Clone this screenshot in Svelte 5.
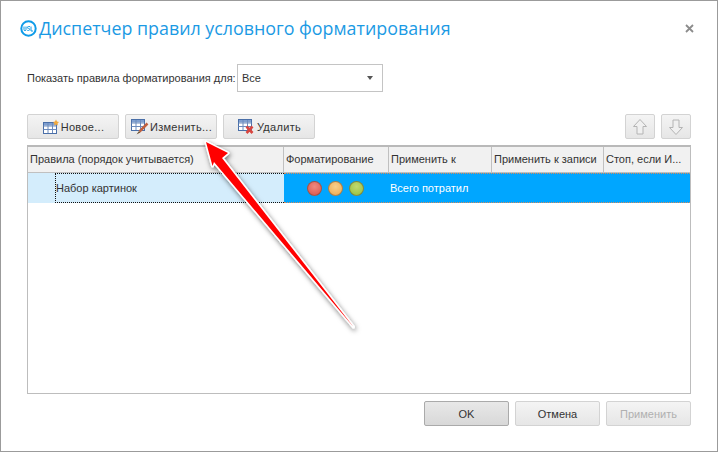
<script>
    const columns = [
        { label: 'Правила (порядок учитывается)', width: 256 },
        { label: 'Форматирование', width: 105 },
        { label: 'Применить к', width: 103 },
        { label: 'Применить к записи', width: 112 },
        { label: 'Стоп, если И...', width: 85 }
    ];
</script>

<div class="window">
    <header class="title">
        <svg class="logo" width="17" height="17" viewBox="0 0 17 17">
            <circle cx="8.5" cy="8.5" r="7.2" fill="none" stroke="#0f9be8" stroke-width="2" />
            <path d="M4 6.5v3q0 1.2 1 1.2t1-1.2v-3M10 6.6H8.2q-.8 0-.8.9t.8.9h.6q.8 0 .8 1t-.8 1H7.300M11 6.500v4.500h2" fill="none" stroke="#0f9be8" stroke-width="1" />
        </svg>
        <h1>Диспетчер правил условного форматирования</h1>
        <svg class="close" width="9" height="9" viewBox="0 0 9 9">
            <path d="M1 1l7 7M8 1l-7 7" stroke="#8c8c8c" stroke-width="1.800" />
        </svg>
    </header>

    <div class="filter">
        <span class="filter-label">Показать правила форматирования для:</span>
        <div class="select">
            <span>Все</span>
            <i class="caret"></i>
        </div>
    </div>

    <div class="toolbar">
        <button class="btn tool">
            <svg width="18" height="16" viewBox="0 0 18 16">
                <rect x="1.500" y="3.500" width="13" height="11" fill="#fff" stroke="#4a6fa8" />
                <rect x="2" y="4" width="12" height="2.500" fill="#7f9fd0" />
                <path d="M1.500 7h13M1.500 10.500h13M6 4v10M10.500 4v10" stroke="#6d8cbd" />
                <path d="M14 0.500l1 2 2 .5-1.500 1.500.5 2-2-1-2 1 .5-2L11 3l2-.5z" fill="#f2a93b" />
            </svg>
            Новое...
        </button>
        <button class="btn tool">
            <svg width="19" height="18" viewBox="0 0 19 18">
                <rect x="1.500" y="1.500" width="13" height="11" fill="#fff" stroke="#4a6fa8" />
                <rect x="2" y="2" width="12" height="2.500" fill="#7f9fd0" />
                <path d="M1.500 5h13M1.500 8.500h13M6 2v10M10.500 2v10" stroke="#6d8cbd" />
                <path d="M17.500 5.500l-8 8" stroke="#c0603f" stroke-width="2.500" />
                <path d="M9 13l-2.500 3.500 3.800-2z" fill="#6b5030" />
            </svg>
            Изменить...
        </button>
        <button class="btn tool">
            <svg width="19" height="17" viewBox="0 0 19 17">
                <rect x="1.500" y="1.500" width="13" height="11" fill="#fff" stroke="#4a6fa8" />
                <rect x="2" y="2" width="12" height="2.500" fill="#7f9fd0" />
                <path d="M1.500 5h13M1.500 8.500h13M6 2v10M10.500 2v10" stroke="#6d8cbd" />
                <path d="M9.500 8.500l6 6.500M15.500 8.500l-6 6.500" stroke="#d8453f" stroke-width="2.600" />
            </svg>
            Удалить
        </button>
        <div class="spacer"></div>
        <button class="btn move" aria-label="Вверх">
            <svg width="16" height="18" viewBox="0 0 16 18">
                <path d="M8 1.500L14.500 8.500H11V16H5V8.500H1.500z" fill="#f0f0f0" stroke="#b4b4b4" />
            </svg>
        </button>
        <button class="btn move" aria-label="Вниз">
            <svg width="16" height="18" viewBox="0 0 16 18">
                <path d="M8 16.500L14.500 9.500H11V2H5V9.500H1.500z" fill="#f0f0f0" stroke="#b4b4b4" />
            </svg>
        </button>
    </div>

    <div class="grid">
        <div class="head">
            {#each columns as col}
                <div class="th" style="width: {col.width}px">{col.label}</div>
            {/each}
        </div>
        <div class="row">
            <div class="rule">
                <div class="indent"></div>
                <div class="rule-name">Набор картинок</div>
            </div>
            <div class="selected">
                <div class="dots">
                    <i class="dot red"></i>
                    <i class="dot orange"></i>
                    <i class="dot green"></i>
                </div>
                <div class="applies">Всего потратил</div>
            </div>
        </div>
    </div>

    <footer class="actions">
        <button class="btn action primary">OK</button>
        <button class="btn action">Отмена</button>
        <button class="btn action disabled">Применить</button>
    </footer>

    <svg class="arrow" width="718" height="452" viewBox="0 0 718 452">
        <defs>
            <filter id="shadow" x="-20%" y="-20%" width="140%" height="140%">
                <feDropShadow dx="1" dy="2" stdDeviation="2.500" flood-color="#000" flood-opacity="0.55" />
            </filter>
        </defs>
        <path
            class="arrow-shape"
            d="M206 142L228 153L222 158L353.500 327L214 162L212.500 166Z"
            filter="url(#shadow)"
        />
    </svg>
</div>

<style>
    :global(body) {
        margin: 0;
        background: #fff;
    }

    .window {
        position: relative;
        box-sizing: border-box;
        width: 718px;
        height: 452px;
        border: 1px solid #9b9b9b;
        padding: 0 26px;
        background: #fff;
        font-family: 'Liberation Sans', Arial, sans-serif;
        font-size: 11px;
        color: #333;
        overflow: hidden;
    }

    .title {
        display: flex;
        align-items: center;
        height: 56px;
        margin: 0 -4px 0 -7px;
        padding-bottom: 2px;
        box-sizing: border-box;
    }

    .logo {
        margin-right: 2px;
        flex: none;
    }

    h1 {
        flex: 1;
        margin: 0;
        font-family: 'Open Sans', sans-serif;
        font-size: 17.850px;
        font-weight: 400;
        color: #1b9ae4;
        white-space: nowrap;
    }

    .close {
        margin-right: 1px;
    }

    .filter {
        display: flex;
        align-items: center;
        height: 28px;
        margin-top: 7px;
    }

    .filter-label {
        width: 210px;
        flex: none;
    }

    .select {
        display: flex;
        align-items: center;
        justify-content: space-between;
        box-sizing: border-box;
        width: 146px;
        height: 28px;
        padding: 0 9px 0 4px;
        border: 1px solid #c4c4c4;
    }

    .caret {
        width: 0;
        height: 0;
        border-left: 3.500px solid transparent;
        border-right: 3.500px solid transparent;
        border-top: 4px solid #555;
    }

    .toolbar {
        display: flex;
        gap: 6px;
        margin-top: 22px;
    }

    .spacer {
        flex: 1;
    }

    .btn {
        display: flex;
        align-items: center;
        justify-content: center;
        box-sizing: border-box;
        height: 25px;
        padding: 0;
        border: 1px solid #d3d3d3;
        border-radius: 2px;
        background: linear-gradient(#f4f4f4, #e6e6e6);
        font: inherit;
        color: #333;
    }

    .tool {
        width: 92px;
        gap: 1px;
        letter-spacing: 0.3px;
    }

    .move {
        width: 30px;
    }

    .grid {
        box-sizing: border-box;
        height: 249px;
        margin-top: 6px;
        border: 1px solid #bdbdbd;
        border-top: 2px solid #b9b9b9;
    }

    .head {
        display: flex;
        height: 25px;
        background: #f1f1f1;
        border-bottom: 1px solid #c0c0c0;
    }

    .th {
        box-sizing: border-box;
        flex: none;
        padding-left: 2px;
        line-height: 25px;
        border-right: 1px solid #c0c0c0;
        white-space: nowrap;
        overflow: hidden;
    }

    .th:last-child {
        flex: 1;
        border-right: none;
    }

    .row {
        display: flex;
        height: 30px;
    }

    .rule {
        display: flex;
        flex: none;
        width: 256px;
        background: #d4edfc;
    }

    .indent {
        width: 27px;
    }

    .rule-name {
        flex: 1;
        line-height: 28px;
        border: 1px dotted #111;
        border-right: none;
    }

    .selected {
        display: flex;
        flex: 1;
        align-items: center;
        box-sizing: border-box;
        border-top: 1px dotted #d98a5a;
        border-bottom: 1px dotted #d98a5a;
        background: #00a6ff;
        color: #fff;
    }

    .dots {
        display: flex;
        gap: 6px;
        box-sizing: border-box;
        width: 106px;
        padding-left: 23px;
    }

    .dot {
        width: 15px;
        height: 15px;
        box-sizing: border-box;
        border-radius: 50%;
        border: 1px solid rgba(90, 60, 40, 0.45);
    }

    .red {
        background: radial-gradient(circle at 50% 35%, #ee8a80, #d9534a);
    }

    .orange {
        background: radial-gradient(circle at 50% 35%, #f8cf8c, #eda94c);
    }

    .green {
        background: radial-gradient(circle at 50% 35%, #bfd96f, #95bf3c);
    }

    .actions {
        display: flex;
        justify-content: flex-end;
        gap: 6px;
        margin-top: 7px;
    }

    .action {
        width: 85px;
    }

    .primary {
        border-color: #aaa;
        background: linear-gradient(#e8e8e8, #d8d8d8);
    }

    .disabled {
        color: #b0b0b0;
    }

    .arrow {
        position: absolute;
        left: -1px;
        top: -1px;
        pointer-events: none;
    }

    .arrow-shape {
        fill: #ff0000;
        stroke: #fff;
        stroke-width: 3;
        stroke-linejoin: round;
        paint-order: stroke;
    }
</style>
